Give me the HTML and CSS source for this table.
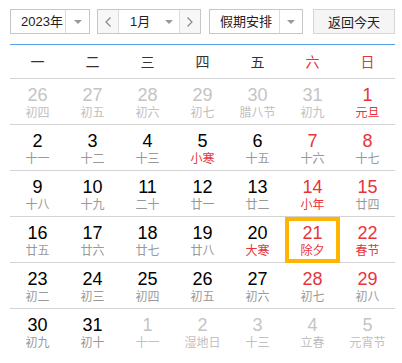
FILE: index.html
```html
<!DOCTYPE html>
<html lang="zh-CN">
<head>
<meta charset="utf-8">
<title>万年历</title>
<link rel="stylesheet" href="styles.css">
</head>
<body>
<div class="calendar">
  <div class="toolbar">
    <div class="select year">
      <span class="sel-text">2023年</span>
      <span class="sel-arrow"><svg width="8" height="4" viewBox="0 0 8 4"><path d="M0 0H8L4 4Z" fill="#999"/></svg></span>
    </div>
    <div class="select month">
      <span class="nav prev"><svg width="6" height="10" viewBox="0 0 6 10"><path d="M5.5 0.5L1 5L5.5 9.5" fill="none" stroke="#8a8a8a" stroke-width="1.2"/></svg></span>
      <span class="sel-text month-text">1月<svg class="inline-arrow" width="8" height="4" viewBox="0 0 8 4"><path d="M0 0H8L4 4Z" fill="#999"/></svg></span>
      <span class="nav next"><svg width="6" height="10" viewBox="0 0 6 10"><path d="M0.5 0.5L5 5L0.5 9.5" fill="none" stroke="#8a8a8a" stroke-width="1.2"/></svg></span>
    </div>
    <div class="select holiday">
      <span class="sel-text">假期安排</span>
      <span class="sel-arrow"><svg width="8" height="4" viewBox="0 0 8 4"><path d="M0 0H8L4 4Z" fill="#999"/></svg></span>
    </div>
    <button class="today-btn">返回今天</button>
  </div>

  <div class="week-head">
    <span>一</span><span>二</span><span>三</span><span>四</span><span>五</span><span class="red">六</span><span class="red">日</span>
  </div>

  <div class="week">
    <div class="day other"><b>26</b><i>初四</i></div>
    <div class="day other"><b>27</b><i>初五</i></div>
    <div class="day other"><b>28</b><i>初六</i></div>
    <div class="day other"><b>29</b><i>初七</i></div>
    <div class="day other"><b>30</b><i>腊八节</i></div>
    <div class="day other"><b>31</b><i>初九</i></div>
    <div class="day"><b class="red">1</b><i class="red">元旦</i></div>
  </div>
  <div class="week">
    <div class="day"><b>2</b><i>十一</i></div>
    <div class="day"><b>3</b><i>十二</i></div>
    <div class="day"><b>4</b><i>十三</i></div>
    <div class="day"><b>5</b><i class="red">小寒</i></div>
    <div class="day"><b>6</b><i>十五</i></div>
    <div class="day"><b class="red">7</b><i>十六</i></div>
    <div class="day"><b class="red">8</b><i>十七</i></div>
  </div>
  <div class="week">
    <div class="day"><b>9</b><i>十八</i></div>
    <div class="day"><b>10</b><i>十九</i></div>
    <div class="day"><b>11</b><i>二十</i></div>
    <div class="day"><b>12</b><i>廿一</i></div>
    <div class="day"><b>13</b><i>廿二</i></div>
    <div class="day"><b class="red">14</b><i class="red">小年</i></div>
    <div class="day"><b class="red">15</b><i>廿四</i></div>
  </div>
  <div class="week">
    <div class="day"><b>16</b><i>廿五</i></div>
    <div class="day"><b>17</b><i>廿六</i></div>
    <div class="day"><b>18</b><i>廿七</i></div>
    <div class="day"><b>19</b><i>廿八</i></div>
    <div class="day"><b>20</b><i class="red">大寒</i></div>
    <div class="day today"><b class="red">21</b><i class="red">除夕</i></div>
    <div class="day"><b class="red">22</b><i class="red">春节</i></div>
  </div>
  <div class="week">
    <div class="day"><b>23</b><i>初二</i></div>
    <div class="day"><b>24</b><i>初三</i></div>
    <div class="day"><b>25</b><i>初四</i></div>
    <div class="day"><b>26</b><i>初五</i></div>
    <div class="day"><b>27</b><i>初六</i></div>
    <div class="day"><b class="red">28</b><i>初七</i></div>
    <div class="day"><b class="red">29</b><i>初八</i></div>
  </div>
  <div class="week last">
    <div class="day"><b>30</b><i>初九</i></div>
    <div class="day"><b>31</b><i>初十</i></div>
    <div class="day other"><b>1</b><i>十一</i></div>
    <div class="day other"><b>2</b><i>湿地日</i></div>
    <div class="day other"><b>3</b><i>十三</i></div>
    <div class="day other"><b>4</b><i>立春</i></div>
    <div class="day other"><b>5</b><i>元宵节</i></div>
  </div>
</div>
</body>
</html>
```

FILE: styles.css
```css
* { box-sizing: border-box; }

html, body {
  margin: 0;
  padding: 0;
  background: #fff;
}

body {
  font-family: Arial, "Liberation Sans", "Noto Sans CJK SC", sans-serif;
  color: #333;
}

.calendar {
  width: 402px;
  padding: 9px 7px 0 10px;
}

.toolbar {
  display: flex;
  height: 25px;
  font-size: 13px;
}

.select {
  display: flex;
  height: 25px;
  border: 1px solid #c6c6c6;
  background: #fff;
}

.sel-text {
  display: flex;
  align-items: center;
  padding-left: 10px;
  color: #222;
  line-height: 23px;
}

.sel-arrow {
  display: flex;
  align-items: center;
  justify-content: center;
  border-left: 1px solid #dcdcdc;
}

.year { width: 80px; }
.year .sel-text { width: 54px; }
.year .sel-arrow { width: 24px; }

.month {
  width: 104px;
  margin-left: 7px;
}
.nav {
  display: flex;
  align-items: center;
  justify-content: center;
  width: 21px;
  background: #f7f7f7;
}
.prev { border-right: 1px solid #dcdcdc; }
.next { border-left: 1px solid #dcdcdc; }
.month-text {
  width: 60px;
  padding-left: 11px;
}
.inline-arrow { margin-left: 15px; }

.holiday {
  width: 94px;
  margin-left: 8px;
}
.holiday .sel-text { width: 69px; }
.holiday .sel-arrow { width: 23px; }

.today-btn {
  width: 82px;
  height: 25px;
  margin-left: 10px;
  padding: 0;
  border: 1px solid #d6d6d6;
  background: #f5f5f5;
  font-family: Arial, "Liberation Sans", "Noto Sans CJK SC", sans-serif;
  font-size: 13px;
  color: #222;
}

.week-head {
  display: grid;
  grid-template-columns: repeat(7, 55px);
  margin-top: 10px;
  border-top: 1px solid #559ee9;
  border-bottom: 1px solid #d4d4d4;
  height: 35px;
  font-size: 14px;
  line-height: 34px;
  text-align: center;
  color: #333;
}

.week {
  display: grid;
  grid-template-columns: repeat(7, 55px);
  height: 46px;
  border-bottom: 1px solid #d4d4d4;
}
.week.last { border-bottom: none; }

.day {
  display: flex;
  flex-direction: column;
  align-items: center;
  padding-top: 6px;
}

.day b {
  font-weight: normal;
  font-size: 18px;
  line-height: 20px;
  color: #000;
}

.day i {
  font-style: normal;
  font-size: 12px;
  line-height: 16px;
  color: #999;
}

.day.other b { color: #c4c4c4; }
.day.other i { color: #c0c0c0; }

.red,
.day b.red,
.day i.red { color: #e8333a; }

.day.today {
  border: 4px solid #ffb400;
  padding-top: 2px;
  margin-bottom: 2px;
}
```
